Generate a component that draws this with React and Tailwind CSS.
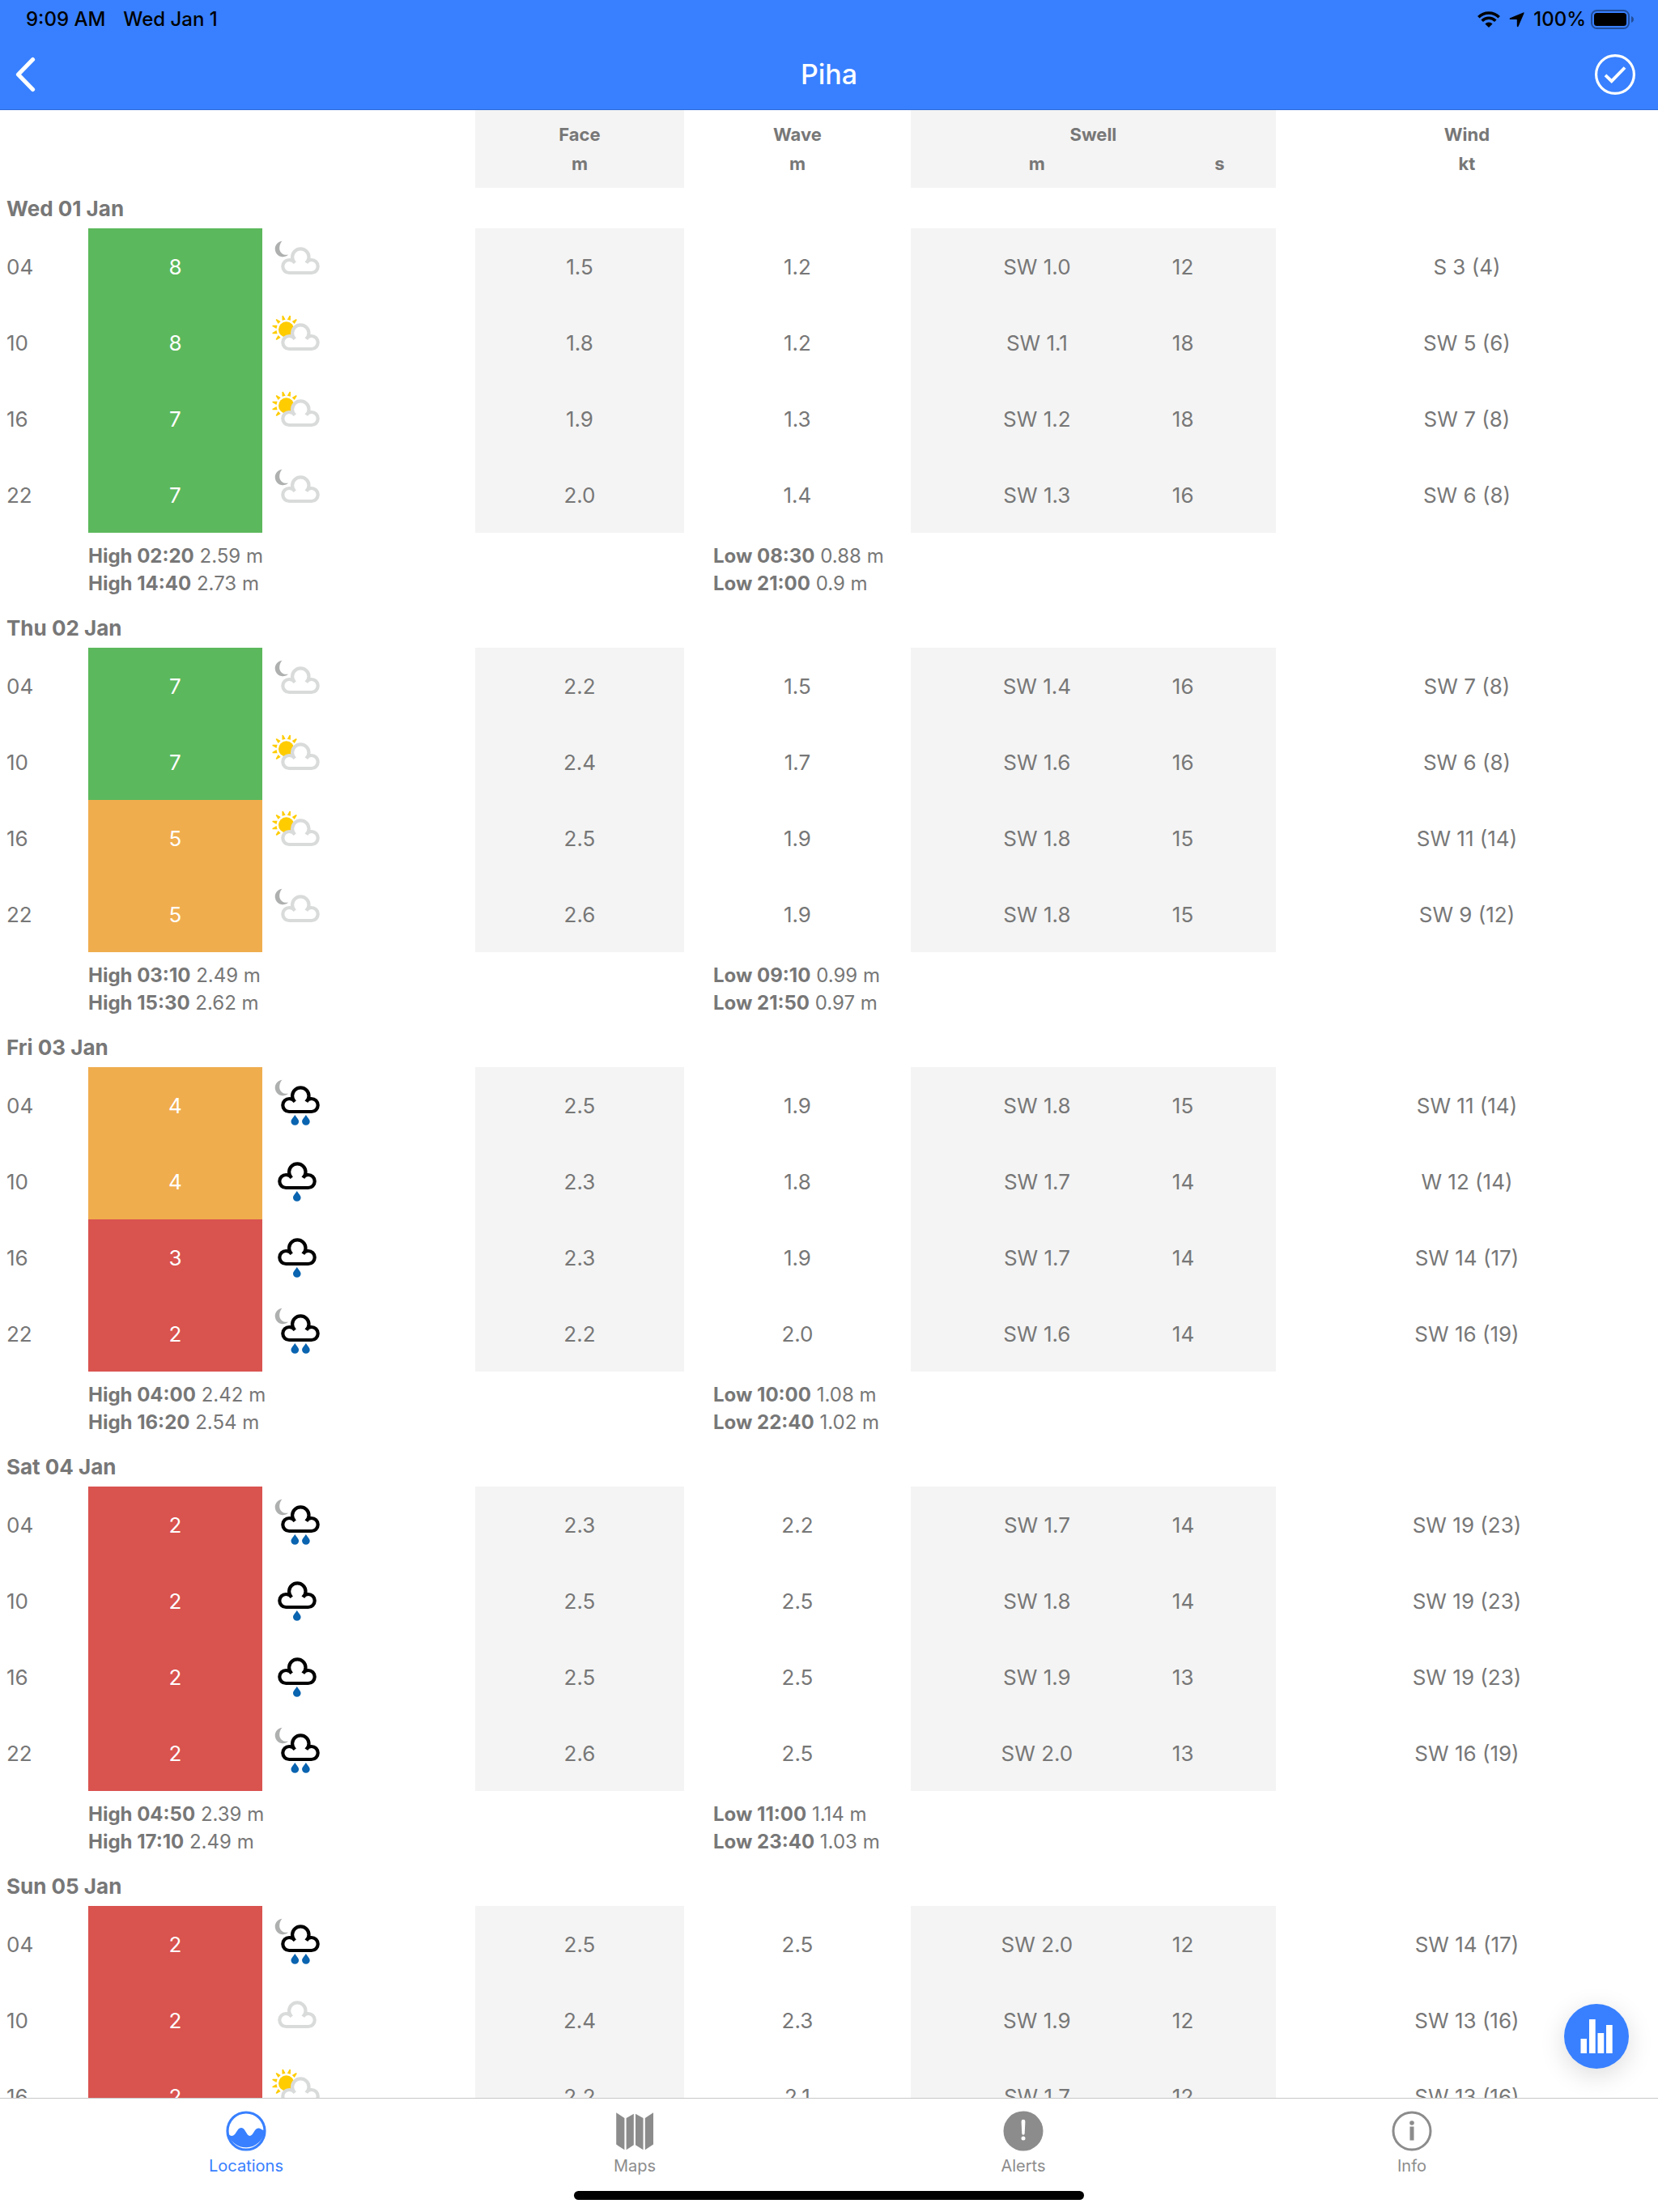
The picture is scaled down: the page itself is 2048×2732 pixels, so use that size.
import { useState } from "react";
import clsx from "clsx";

// each row: hour, rating, weather, face, wave, swell, period, wind
const days = [
  {
    date: "Wed 01 Jan",
    rows: [
      ["04", 8, "cloudNight", "1.5", "1.2", "SW 1.0", 12, "S 3 (4)"],
      ["10", 8, "cloudDay", "1.8", "1.2", "SW 1.1", 18, "SW 5 (6)"],
      ["16", 7, "cloudDay", "1.9", "1.3", "SW 1.2", 18, "SW 7 (8)"],
      ["22", 7, "cloudNight", "2.0", "1.4", "SW 1.3", 16, "SW 6 (8)"],
    ],
    high: [["02:20", "2.59"], ["14:40", "2.73"]],
    low: [["08:30", "0.88"], ["21:00", "0.9"]],
  },
  {
    date: "Thu 02 Jan",
    rows: [
      ["04", 7, "cloudNight", "2.2", "1.5", "SW 1.4", 16, "SW 7 (8)"],
      ["10", 7, "cloudDay", "2.4", "1.7", "SW 1.6", 16, "SW 6 (8)"],
      ["16", 5, "cloudDay", "2.5", "1.9", "SW 1.8", 15, "SW 11 (14)"],
      ["22", 5, "cloudNight", "2.6", "1.9", "SW 1.8", 15, "SW 9 (12)"],
    ],
    high: [["03:10", "2.49"], ["15:30", "2.62"]],
    low: [["09:10", "0.99"], ["21:50", "0.97"]],
  },
  {
    date: "Fri 03 Jan",
    rows: [
      ["04", 4, "rainNight", "2.5", "1.9", "SW 1.8", 15, "SW 11 (14)"],
      ["10", 4, "rain", "2.3", "1.8", "SW 1.7", 14, "W 12 (14)"],
      ["16", 3, "rain", "2.3", "1.9", "SW 1.7", 14, "SW 14 (17)"],
      ["22", 2, "rainNight", "2.2", "2.0", "SW 1.6", 14, "SW 16 (19)"],
    ],
    high: [["04:00", "2.42"], ["16:20", "2.54"]],
    low: [["10:00", "1.08"], ["22:40", "1.02"]],
  },
  {
    date: "Sat 04 Jan",
    rows: [
      ["04", 2, "rainNight", "2.3", "2.2", "SW 1.7", 14, "SW 19 (23)"],
      ["10", 2, "rain", "2.5", "2.5", "SW 1.8", 14, "SW 19 (23)"],
      ["16", 2, "rain", "2.5", "2.5", "SW 1.9", 13, "SW 19 (23)"],
      ["22", 2, "rainNight", "2.6", "2.5", "SW 2.0", 13, "SW 16 (19)"],
    ],
    high: [["04:50", "2.39"], ["17:10", "2.49"]],
    low: [["11:00", "1.14"], ["23:40", "1.03"]],
  },
  {
    date: "Sun 05 Jan",
    rows: [
      ["04", 2, "rainNight", "2.5", "2.5", "SW 2.0", 12, "SW 14 (17)"],
      ["10", 2, "cloud", "2.4", "2.3", "SW 1.9", 12, "SW 13 (16)"],
      ["16", 2, "cloudDay", "2.2", "2.1", "SW 1.7", 12, "SW 13 (16)"],
    ],
  },
];

const ratingColor = (rating) => {
  if (rating >= 7) return "bg-[#5cb85c]";
  if (rating >= 4) return "bg-[#f0ad4e]";
  return "bg-[#d9534f]";
};

const DROP = "c-2.3 3.6 -4.8 5.6 -4.8 8.2a4.8 4.6 0 0 0 9.6 0c0 -2.6 -2.5 -4.6 -4.8 -8.2z";
const RAY_ANGLES = [-135, -105, -75, -45, -15, 15, 45];

const WeatherIcon = ({ type }) => {
  const night = type.endsWith("Night");
  const day = type.endsWith("Day");
  const rain = type.startsWith("rain");
  // a cloud with nothing behind it sits a little further left
  const shift = night || day ? 0 : -4;

  return (
    <svg width="80" height="94" viewBox="0 0 80 94" className="block" role="img" aria-label={type}>
      {night && (
        <path d="M24.5 15.7A9.8 9.8 0 1 0 32.2 32.6C27 33.8 21.2 30.6 21.2 24.4C21.2 21 22.4 18 24.5 15.7z" fill="#aeb0af" />
      )}
      {day && (
        <g fill="#ffcc00">
          <circle cx="29.7" cy="31" r="9.7" />
          {RAY_ANGLES.map((angle) => (
            <path
              key={angle}
              d="M27.6 18.9L29 13.2h1.4L31.8 18.9z"
              transform={`rotate(${angle} 29.7 31)`}
            />
          ))}
        </g>
      )}
      <g transform={`translate(${shift} 0)`}>
        <path
          d="M33.3 55a8 8 0 0 1 0 -16c2.6 0 4.6 1 6.6 3.2a10 10 0 1 1 14.8 0c2 -2.2 4 -3.2 6 -3.2a8 8 0 0 1 0 16z"
          fill="#fff"
        />
        <path
          d="M40.4 42.6C38.4 40.2 36 39 33.3 39a8 8 0 0 0 0 16H60.7a8 8 0 0 0 0 -16C58 39 55.8 40.2 54.2 42.6M39.8 42.4a10.2 10.2 0 1 1 15 0"
          fill="none"
          stroke={rain ? "#000" : "#d9dbda"}
          strokeWidth="4.2"
        />
      </g>
      {rain && night && <path d={`M40.3 59${DROP}M53.9 59${DROP}`} fill="#0a64b0" />}
      {rain && !night && <path d={`M42.8 59${DROP}`} fill="#0a64b0" />}
    </svg>
  );
};

const LocationsIcon = () => (
  <svg width="50" height="50" viewBox="0 0 50 50">
    <circle cx="25" cy="25" r="23" fill="none" stroke="currentColor" strokeWidth="3.2" />
    <path
      d="M3 28C5 31.5 8.5 32 11 29C14 25.5 15 21 19.2 21C24 21 25.5 31 29.5 31C34 31 35 21.5 40 21.5C43.5 21.5 44 24 47.5 24V26A23 23 0 0 1 2.5 28z"
      fill="currentColor"
    />
  </svg>
);

const MapsIcon = () => (
  <svg width="50" height="50" viewBox="0 0 50 50" fill="currentColor">
    <path d="M2.2 2.3L12.4 9V48.3L2.2 41.6z" />
    <path d="M14.6 9L23.8 3.8V42.3L14.6 48.3z" />
    <path d="M26 3.8L35.5 9V48.3L26 42.3z" />
    <path d="M37.8 9L48 2.3V41.6L37.8 48.3z" />
  </svg>
);

const AlertsIcon = () => (
  <svg width="50" height="50" viewBox="0 0 50 50">
    <circle cx="25" cy="25" r="24.5" fill="currentColor" />
    <path d="M22.6 13.2a2.4 2.4 0 0 1 4.8 0L26.7 28a1.7 1.7 0 0 1 -3.4 0z" fill="#fff" />
    <circle cx="25" cy="34" r="2.5" fill="#fff" />
  </svg>
);

const InfoIcon = () => (
  <svg width="50" height="50" viewBox="0 0 50 50">
    <circle cx="25" cy="25" r="23" fill="none" stroke="currentColor" strokeWidth="3" />
    <circle cx="25" cy="15" r="2.8" fill="currentColor" />
    <rect x="22.5" y="19.5" width="5" height="17" fill="currentColor" />
  </svg>
);

const tabs = [
  { label: "Locations", Icon: LocationsIcon },
  { label: "Maps", Icon: MapsIcon },
  { label: "Alerts", Icon: AlertsIcon },
  { label: "Info", Icon: InfoIcon },
];

const StatusBar = () => (
  <div className="flex h-12 items-center justify-between pr-[29px] pl-8 text-2xl font-medium text-black">
    <div className="flex gap-[22px]">
      <span>9:09 AM</span>
      <span>Wed Jan 1</span>
    </div>
    <div className="flex items-center gap-[11px]">
      <svg width="28" height="20" viewBox="0 0 28 20" fill="none" stroke="#000" strokeWidth="3.6">
        <path d="M1.3 7.2A18 18 0 0 1 26.7 7.2" />
        <path d="M5.7 11.7A11.7 11.7 0 0 1 22.3 11.7" />
        <path d="M14 20L9.4 15.4A6.5 6.5 0 0 1 18.6 15.4z" fill="#000" stroke="none" />
      </svg>
      <svg width="19" height="19" viewBox="0 0 19 19">
        <path d="M17.6 .4C18.3 .1 18.8 .7 18.5 1.4L11.6 17.5C11.1 18.6 9.8 18.4 9.8 17.2V9.6C9.8 9.3 9.6 9.1 9.3 9.1H1.6C.4 9.1 .3 7.8 1.3 7.3z" fill="#000" />
      </svg>
      <div className="flex items-center gap-[6px]">
        <span>100%</span>
        <svg width="54" height="24" viewBox="0 0 54 24">
          <rect x="1" y="1" width="46" height="22" rx="6.5" fill="none" stroke="#000" strokeOpacity=".4" strokeWidth="2" />
          <rect x="4" y="4" width="40" height="16" rx="3.5" fill="#000" />
          <path d="M50 8C54 9.2 54 14.8 50 16z" fill="#000" fillOpacity=".4" />
        </svg>
      </div>
    </div>
  </div>
);

const Tide = ({ label, tides }) => (
  <ul>
    {tides.map(([time, height]) => (
      <li key={time}>
        <b className="font-bold">
          {label} {time}
        </b>{" "}
        {height} m
      </li>
    ))}
  </ul>
);

const ForecastDay = ({ day }) => (
  <tbody>
    <tr className="h-[50px]">
      <th colSpan={8} scope="rowgroup" className="pl-2 text-left font-bold">
        {day.date}
      </th>
    </tr>
    {day.rows.map(([hour, rating, weather, face, wave, swell, period, wind]) => (
      <tr key={hour} className="h-[94px]">
        <td className="pl-2 text-left">{hour}</td>
        <td className={clsx("text-white", ratingColor(rating))}>{rating}</td>
        <td>
          <WeatherIcon type={weather} />
        </td>
        <td className="bg-[#f4f4f4]">{face}</td>
        <td>{wave}</td>
        <td className="bg-[#f4f4f4]">{swell}</td>
        <td className="bg-[#f4f4f4] pl-[11px] text-left">{period}</td>
        <td>{wind}</td>
      </tr>
    ))}
    {day.high && (
      <tr className="text-left text-2xl leading-[34px]">
        <td />
        <td colSpan={3} className="py-3">
          <Tide label="High" tides={day.high} />
        </td>
        <td colSpan={4} className="py-3 pl-9">
          <Tide label="Low" tides={day.low} />
        </td>
      </tr>
    )}
  </tbody>
);

const App = () => {
  const [activeTab, setActiveTab] = useState("Locations");

  return (
    <div className="flex h-screen flex-col bg-white font-['Inter',sans-serif] text-[#777]">
      <header className="border-b border-[#2f6bd8] bg-[#3880ff]">
        <StatusBar />
        <div className="flex h-[87px] items-center justify-between px-[18px] text-white">
          <button aria-label="Back" className="flex w-[60px]">
            <svg width="28" height="44" viewBox="0 0 28 44" fill="none" stroke="currentColor" strokeWidth="5.2" strokeLinecap="round" strokeLinejoin="round">
              <path d="M22.5 3.5L4.5 22L22.5 40.5" />
            </svg>
          </button>
          <h1 className="text-[34px] font-medium">Piha</h1>
          <button aria-label="Select" className="flex w-[60px]">
            <svg width="50" height="50" viewBox="0 0 50 50" fill="none" stroke="currentColor" strokeWidth="3.2">
              <circle cx="25" cy="25" r="23.4" />
              <path d="M13 25.8L20.7 33.2L37 16.5" strokeWidth="3.8" />
            </svg>
          </button>
        </div>
      </header>

      <div className="relative min-h-0 flex-1">
        <main className="h-full overflow-y-auto [scrollbar-width:none]">
          <table className="w-full table-fixed text-center text-[26px]">
            <colgroup>
              <col className="w-[5.32%]" />
              <col className="w-[10.5%]" />
              <col className="w-[12.84%]" />
              <col className="w-[12.6%]" />
              <col className="w-[13.67%]" />
              <col className="w-[15.23%]" />
              <col className="w-[6.79%]" />
              <col className="w-[23.05%]" />
            </colgroup>
            <thead className="text-[22px] leading-9">
              <tr>
                <td colSpan={3} rowSpan={2} />
                <th className="bg-[#f4f4f4] pt-3">Face</th>
                <th className="pt-3">Wave</th>
                <th colSpan={2} className="bg-[#f4f4f4] pt-3">Swell</th>
                <th className="pt-3">Wind</th>
              </tr>
              <tr>
                <th className="bg-[#f4f4f4] pb-3">m</th>
                <th className="pb-3">m</th>
                <th className="bg-[#f4f4f4] pb-3">m</th>
                <th className="bg-[#f4f4f4] pb-3">s</th>
                <th className="pb-3">kt</th>
              </tr>
            </thead>
            {days.map((day) => (
              <ForecastDay key={day.date} day={day} />
            ))}
          </table>
        </main>

        {/* Chart button */}
        <button
          aria-label="Show chart"
          className="absolute right-9 bottom-9 size-20 rounded-full bg-[#3880ff] shadow-[0_8px_32px_rgba(0,0,0,0.14)]"
        >
          <svg width="80" height="80" viewBox="0 0 80 80" fill="#fff">
            <rect x="20.5" y="43" width="7.5" height="18" />
            <rect x="31" y="19" width="7.7" height="42" />
            <rect x="41.5" y="36" width="7.7" height="25" />
            <rect x="52" y="26" width="7.7" height="35" />
          </svg>
        </button>
      </div>

      <footer className="border-t border-[#c8c8c8] py-[15px]">
        <nav className="flex px-16">
          {tabs.map(({ label, Icon }) => (
            <button
              key={label}
              onClick={() => setActiveTab(label)}
              className={clsx(
                "flex flex-1 flex-col items-center gap-1 text-xl",
                activeTab === label ? "text-[#3880ff]" : "text-[#8c8c8c]"
              )}
            >
              <Icon />
              <span>{label}</span>
            </button>
          ))}
        </nav>
        {/* Home indicator */}
        <div className="mx-auto mt-[17px] h-[11px] w-[630px] max-w-full rounded-full bg-black" />
      </footer>
    </div>
  );
};

export default App;
